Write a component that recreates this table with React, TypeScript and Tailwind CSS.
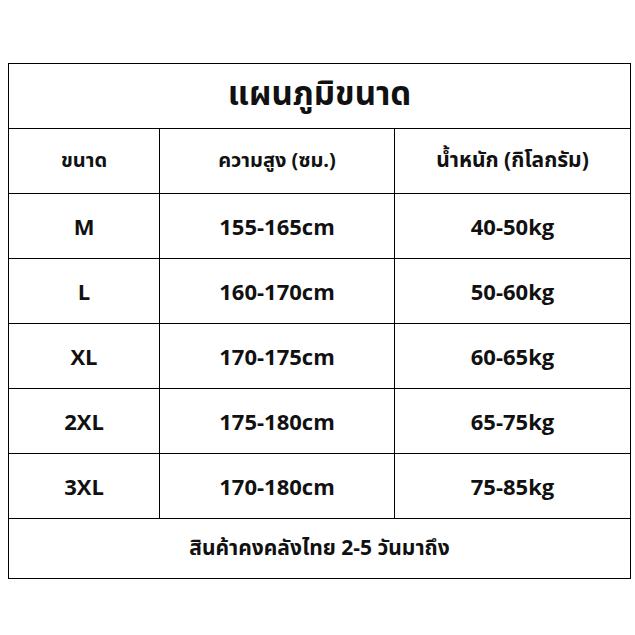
import React from 'react';

const rows = [
  { size: 'M', height: '155-165cm', weight: '40-50kg' },
  { size: 'L', height: '160-170cm', weight: '50-60kg' },
  { size: 'XL', height: '170-175cm', weight: '60-65kg' },
  { size: '2XL', height: '175-180cm', weight: '65-75kg' },
  { size: '3XL', height: '170-180cm', weight: '75-85kg' },
];

const thai = "font-['Noto_Sans_Thai','Open_Sans','Noto_Sans',sans-serif]";

export default function App() {
  return (
    <div className="w-[635px] h-[635px] bg-white pt-[63px] pl-[8px] font-['Open_Sans','Noto_Sans',sans-serif] text-[#111]">
      <div className="w-[623px] border border-black">
        <div className={`h-[65px] flex items-center justify-center border-b border-black text-[33px] font-bold ${thai}`}>
          แผนภูมิขนาด
        </div>
        <div className={`grid grid-cols-[151px_235px_1fr] h-[65px] border-b border-black text-[20px] font-bold ${thai}`}>
          <div className="flex items-center justify-center border-r border-black">ขนาด</div>
          <div className="flex items-center justify-center border-r border-black">ความสูง (ซม.)</div>
          <div className="flex items-center justify-center text-[21px]">น้ำหนัก (กิโลกรัม)</div>
        </div>
        {rows.map((r) => (
          <div key={r.size} className="grid grid-cols-[151px_235px_1fr] h-[65px] border-b border-black text-[22px] font-bold">
            <div className="flex items-center justify-center border-r border-black">{r.size}</div>
            <div className="flex items-center justify-center border-r border-black">{r.height}</div>
            <div className="flex items-center justify-center">{r.weight}</div>
          </div>
        ))}
        <div className={`h-[59px] flex items-center justify-center text-[21px] font-bold ${thai}`}>
          สินค้าคงคลังไทย 2-5 วันมาถึง
        </div>
      </div>
    </div>
  );
}
